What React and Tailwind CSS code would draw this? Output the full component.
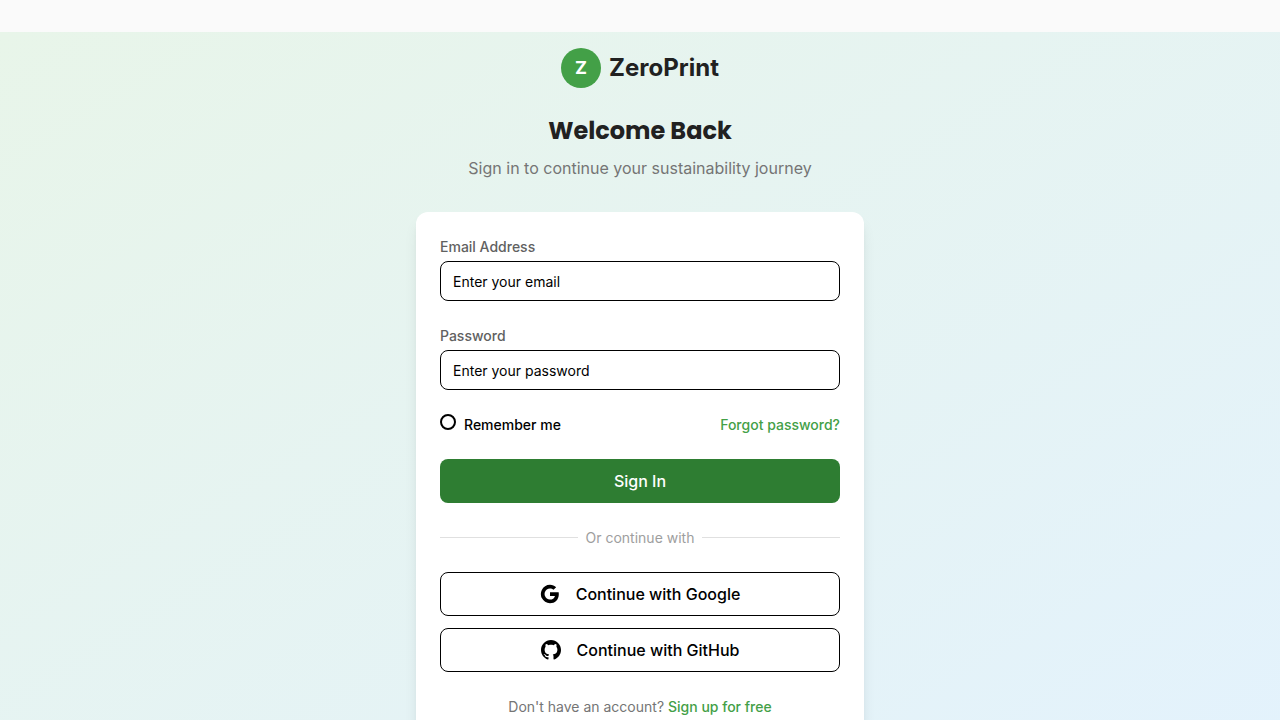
import React from "react";

function GoogleIcon() {
  return (
    <svg className="size-5 shrink-0" viewBox="0 0 24 24" fill="currentColor" aria-hidden="true">
      <path d="M22.56 12.25c0-.78-.07-1.53-.2-2.25H12v4.26h5.92c-.26 1.37-1.04 2.53-2.21 3.31v2.77h3.57c2.08-1.92 3.28-4.74 3.28-8.09z" />
      <path d="M12 23c2.97 0 5.46-.98 7.28-2.66l-3.57-2.77c-.98.66-2.23 1.06-3.71 1.06-2.86 0-5.29-1.93-6.16-4.53H2.18v2.84C3.99 20.53 7.7 23 12 23z" />
      <path d="M5.84 14.09c-.22-.66-.35-1.36-.35-2.09s.13-1.43.35-2.09V7.07H2.18C1.43 8.55 1 10.22 1 12s.43 3.45 1.18 4.93l2.85-2.22.81-.62z" />
      <path d="M12 5.38c1.62 0 3.06.56 4.21 1.64l3.15-3.15C17.45 2.09 14.97 1 12 1 7.7 1 3.99 3.47 2.18 7.07l3.66 2.84c.87-2.6 3.3-4.53 6.16-4.53z" />
    </svg>
  );
}

function GitHubIcon() {
  return (
    <svg className="size-5 shrink-0" viewBox="0 0 24 24" fill="currentColor" aria-hidden="true">
      <path d="M12 0c-6.626 0-12 5.373-12 12 0 5.302 3.438 9.8 8.207 11.387.599.111.793-.261.793-.577v-2.234c-3.338.726-4.033-1.416-4.033-1.416-.546-1.387-1.333-1.756-1.333-1.756-1.089-.745.083-.729.083-.729 1.205.084 1.839 1.237 1.839 1.237 1.07 1.834 2.807 1.304 3.492.997.107-.775.418-1.305.762-1.604-2.665-.305-5.467-1.334-5.467-5.931 0-1.311.469-2.381 1.236-3.221-.124-.303-.535-1.524.117-3.176 0 0 1.008-.322 3.301 1.23.957-.266 1.983-.399 3.003-.404 1.02.005 2.047.138 3.006.404 2.291-1.552 3.297-1.23 3.297-1.23.653 1.653.242 2.874.118 3.176.77.84 1.235 1.911 1.235 3.221 0 4.609-2.807 5.624-5.479 5.921.43.372.823 1.102.823 2.222v3.293c0 .319.192.694.801.576 4.765-1.589 8.199-6.086 8.199-11.386 0-6.627-5.373-12-12-12z" />
    </svg>
  );
}

function Field({ id, label, type, placeholder }) {
  return (
    <div className="flex flex-col gap-1">
      <label htmlFor={id} className="text-sm/[21px] font-medium text-[#616161]">
        {label}
      </label>
      <input
        id={id}
        type={type}
        placeholder={placeholder}
        className="h-10 w-full rounded-lg border border-black bg-white px-3 text-sm text-black placeholder:text-black"
      />
    </div>
  );
}

function SocialButton({ icon, children }) {
  return (
    <button
      type="button"
      className="flex h-11 w-full items-center justify-center gap-4 rounded-lg border border-black bg-white text-base font-medium text-black"
    >
      {icon}
      {children}
    </button>
  );
}

export default function App() {
  return (
    <div className="min-h-screen bg-[#fafafa] pt-8 font-['Inter',sans-serif]">
      <main className="flex min-h-screen items-start justify-center bg-linear-to-br/srgb from-[#e8f5e9] to-[#e3f2fd] px-4 pt-4 pb-16">
        <div className="w-full max-w-md">
          <header className="mb-8 text-center">
            <div className="mb-6 flex items-center justify-center gap-2">
              <span className="flex size-10 items-center justify-center rounded-full bg-[#43a047] text-lg font-bold text-white">
                Z
              </span>
              <span className="text-2xl/9 font-bold text-[#212121]">ZeroPrint</span>
            </div>
            <h1 className="mb-1.5 font-['Poppins','Inter',sans-serif] text-2xl/[38px] font-bold text-[#212121]">
              Welcome Back
            </h1>
            <p className="text-base text-[#757575]">
              Sign in to continue your sustainability journey
            </p>
          </header>

          <section className="rounded-xl bg-white p-6 shadow-lg">
            <form className="flex flex-col gap-6" onSubmit={(e) => e.preventDefault()}>
              <Field id="email" label="Email Address" type="email" placeholder="Enter your email" />
              <Field id="password" label="Password" type="password" placeholder="Enter your password" />
              <div className="flex items-start justify-between text-sm/[21px] font-medium">
                <label htmlFor="remember" className="flex items-start gap-2 text-black">
                  <input
                    id="remember"
                    type="checkbox"
                    className="size-4 appearance-none rounded-full border-2 border-black bg-white checked:bg-black"
                  />
                  Remember me
                </label>
                <a href="#forgot" className="text-[#43a047]">
                  Forgot password?
                </a>
              </div>
              <button
                type="submit"
                className="h-11 w-full rounded-lg bg-[#2e7d32] text-base font-medium text-white"
              >
                Sign In
              </button>
            </form>

            <div className="my-6 flex items-center gap-2 text-sm/[21px] text-[#9e9e9e]">
              <span className="h-px flex-1 bg-[#e0e0e0]" />
              Or continue with
              <span className="h-px flex-1 bg-[#e0e0e0]" />
            </div>

            <div className="flex flex-col gap-3">
              <SocialButton icon={<GoogleIcon />}>Continue with Google</SocialButton>
              <SocialButton icon={<GitHubIcon />}>Continue with GitHub</SocialButton>
            </div>

            <p className="mt-6 text-center text-sm/[21px] text-[#757575]">
              Don't have an account?{" "}
              <a href="#signup" className="font-medium text-[#43a047]">
                Sign up for free
              </a>
            </p>
          </section>
        </div>
      </main>
    </div>
  );
}
